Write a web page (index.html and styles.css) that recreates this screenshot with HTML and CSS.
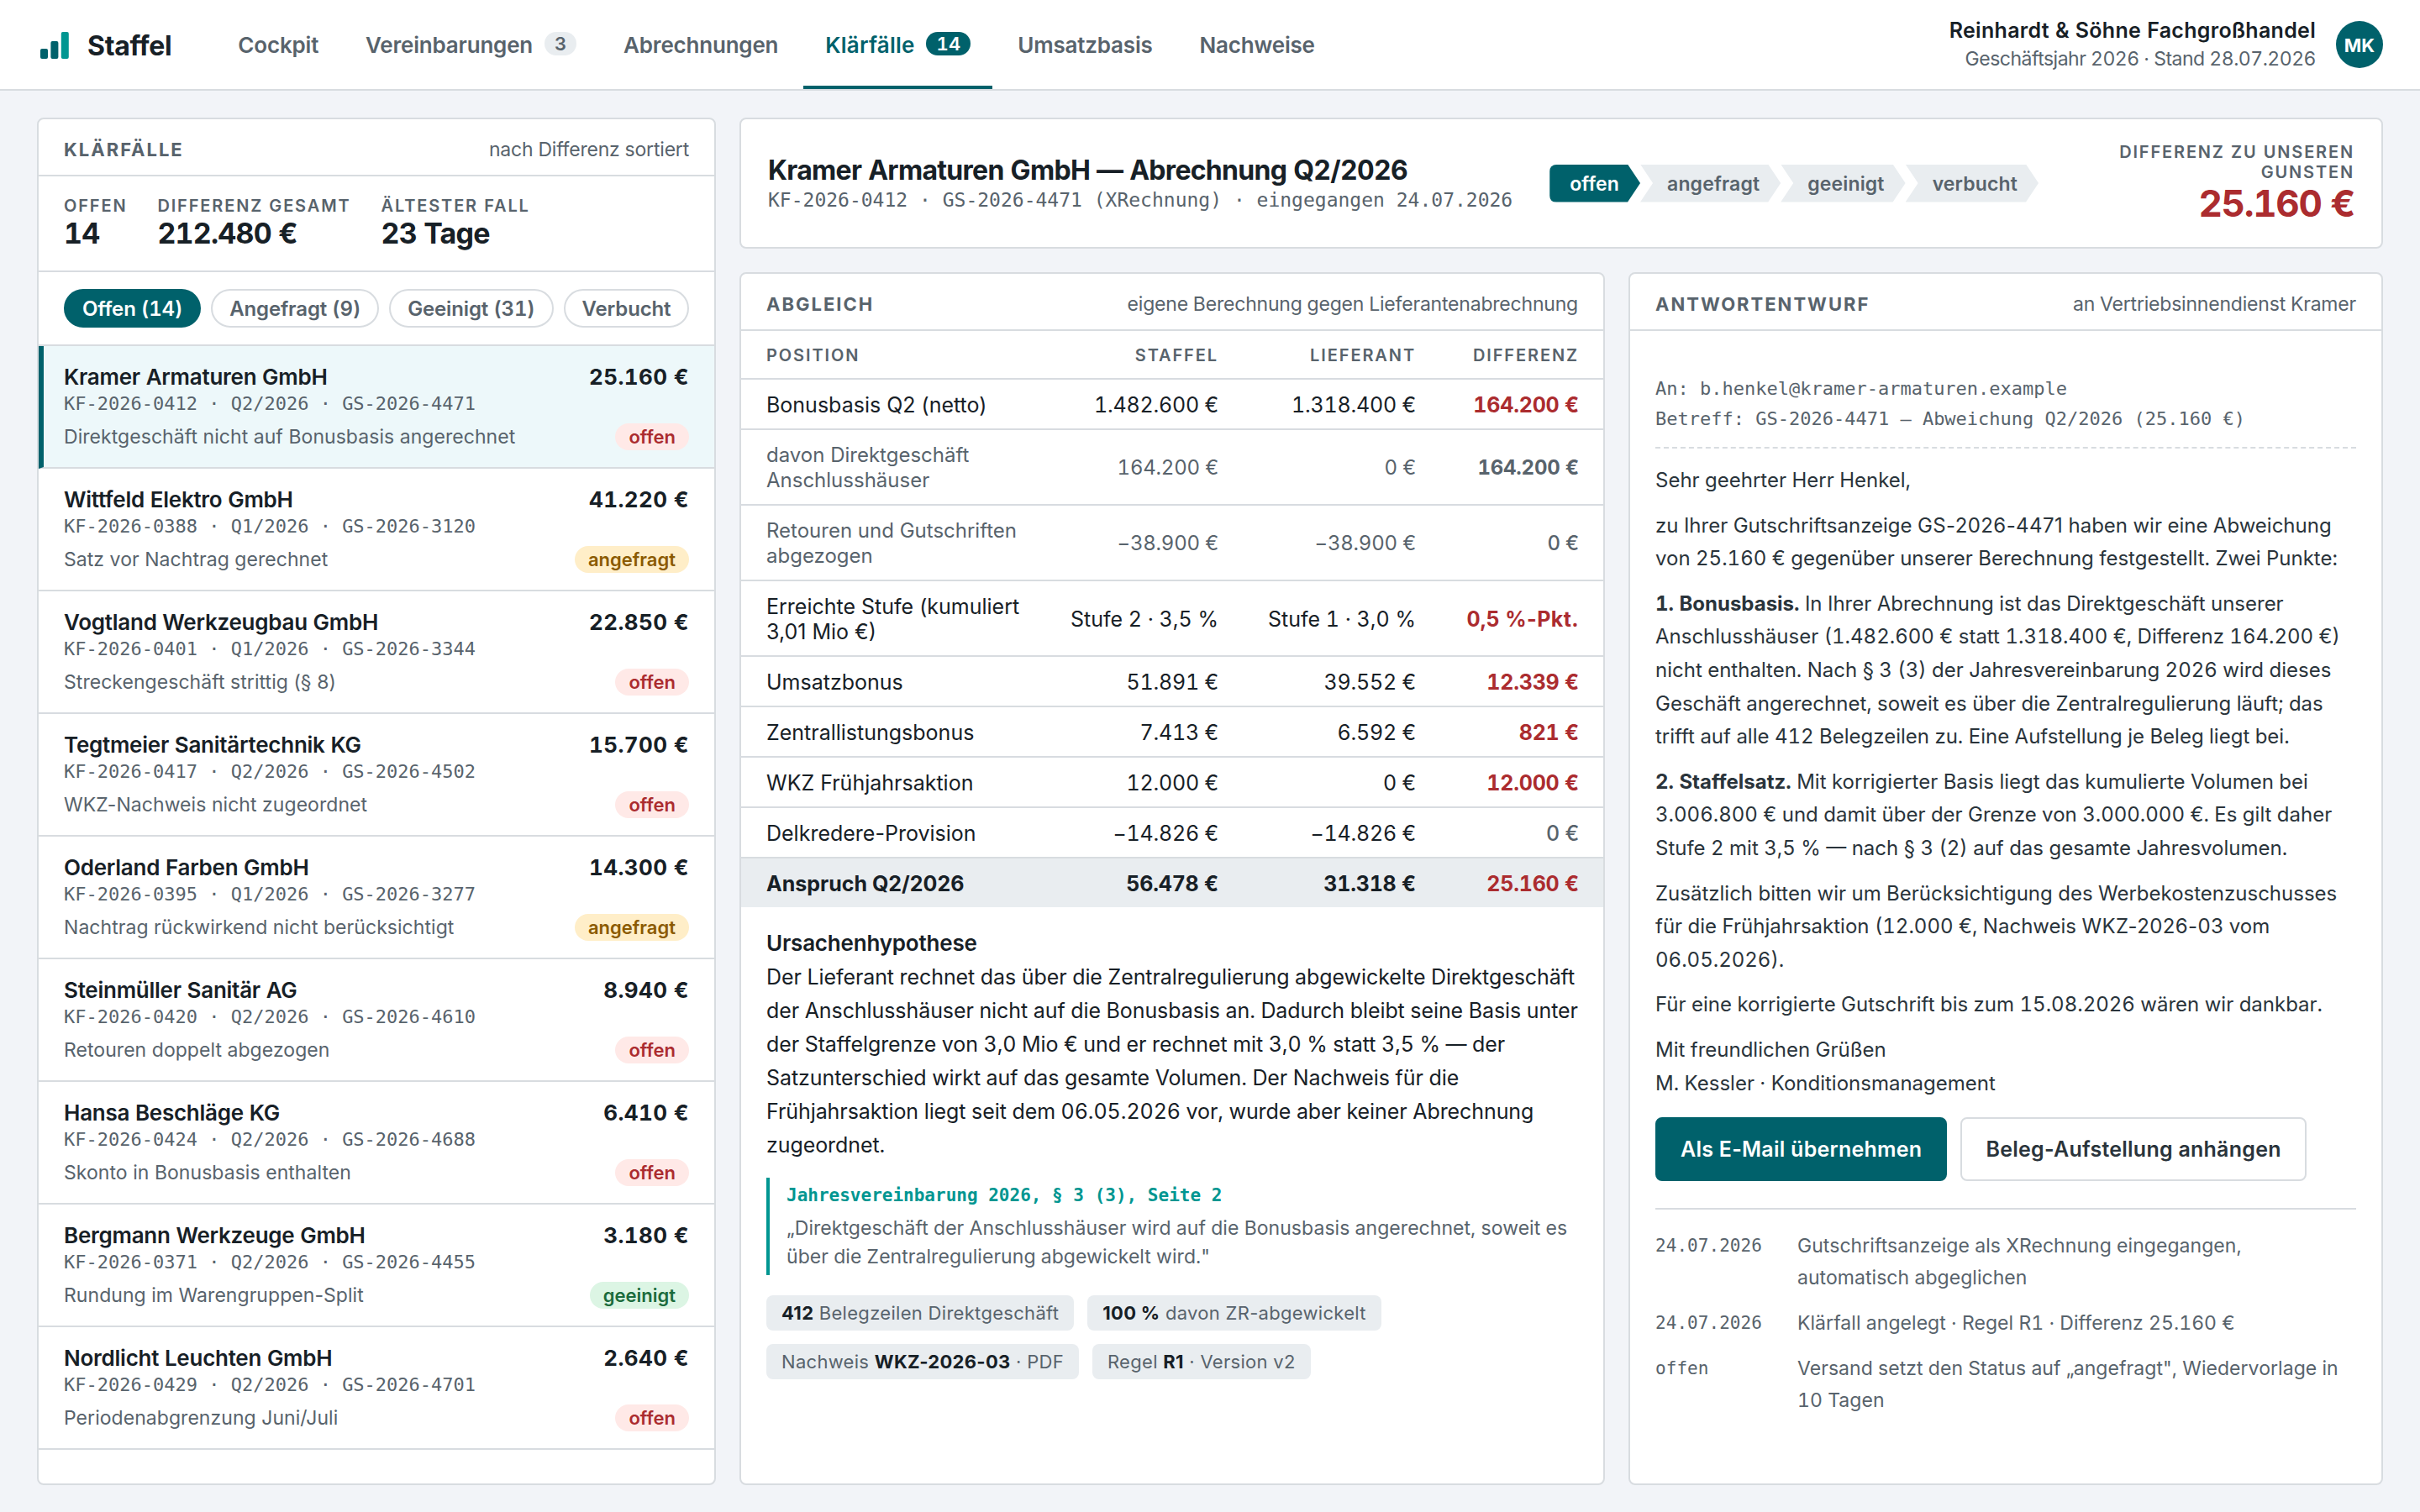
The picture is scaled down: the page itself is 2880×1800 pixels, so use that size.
FILE: index.html
```html
<!DOCTYPE html>
<html lang="de">
<head>
    <meta charset="UTF-8">
    <meta name="viewport" content="width=device-width, initial-scale=1.0">
    <title>Staffel – Klärfälle</title>
    <link rel="stylesheet" href="styles.css">
</head>
<body>
    <header class="topbar">
        <div class="brand">
            <svg class="logo" viewBox="0 0 40 40">
                <rect x="4" y="25" width="9" height="12" rx="2" fill="#00616b"/>
                <rect x="16.4" y="16" width="9" height="21" rx="2" fill="#00616b"/>
                <rect x="28.8" y="5" width="9" height="32" rx="2" fill="#009691"/>
            </svg>
            <span>Staffel</span>
        </div>
        <nav class="nav">
            <a class="nav-item">Cockpit</a>
            <a class="nav-item">Vereinbarungen <span class="count">3</span></a>
            <a class="nav-item">Abrechnungen</a>
            <a class="nav-item active">Klärfälle <span class="count">14</span></a>
            <a class="nav-item">Umsatzbasis</a>
            <a class="nav-item">Nachweise</a>
        </nav>
        <div class="account">
            <div class="account-text">
                <div class="account-name">Reinhardt &amp; Söhne Fachgroßhandel</div>
                <div class="account-meta">Geschäftsjahr 2026 · Stand 28.07.2026</div>
            </div>
            <div class="avatar">MK</div>
        </div>
    </header>

    <main class="layout">
        <section class="panel cases">
            <div class="panel-head">
                <h2>Klärfälle</h2>
                <span>nach Differenz sortiert</span>
            </div>
            <div class="stats">
                <div><div class="label">Offen</div><div class="stat-value">14</div></div>
                <div><div class="label">Differenz gesamt</div><div class="stat-value">212.480 €</div></div>
                <div><div class="label">Ältester Fall</div><div class="stat-value">23 Tage</div></div>
            </div>
            <div class="filters">
                <button class="filter selected">Offen (14)</button>
                <button class="filter">Angefragt (9)</button>
                <button class="filter">Geeinigt (31)</button>
                <button class="filter">Verbucht</button>
            </div>
            <div class="case current">
                <div class="case-row"><span class="case-name">Kramer Armaturen GmbH</span><span class="case-sum">25.160 €</span></div>
                <div class="case-ref">KF-2026-0412 · Q2/2026 · GS-2026-4471</div>
                <div class="case-row case-foot"><span class="case-reason">Direktgeschäft nicht auf Bonusbasis angerechnet</span><span class="tag open">offen</span></div>
            </div>
            <div class="case">
                <div class="case-row"><span class="case-name">Wittfeld Elektro GmbH</span><span class="case-sum">41.220 €</span></div>
                <div class="case-ref">KF-2026-0388 · Q1/2026 · GS-2026-3120</div>
                <div class="case-row case-foot"><span class="case-reason">Satz vor Nachtrag gerechnet</span><span class="tag asked">angefragt</span></div>
            </div>
            <div class="case">
                <div class="case-row"><span class="case-name">Vogtland Werkzeugbau GmbH</span><span class="case-sum">22.850 €</span></div>
                <div class="case-ref">KF-2026-0401 · Q1/2026 · GS-2026-3344</div>
                <div class="case-row case-foot"><span class="case-reason">Streckengeschäft strittig (§ 8)</span><span class="tag open">offen</span></div>
            </div>
            <div class="case">
                <div class="case-row"><span class="case-name">Tegtmeier Sanitärtechnik KG</span><span class="case-sum">15.700 €</span></div>
                <div class="case-ref">KF-2026-0417 · Q2/2026 · GS-2026-4502</div>
                <div class="case-row case-foot"><span class="case-reason">WKZ-Nachweis nicht zugeordnet</span><span class="tag open">offen</span></div>
            </div>
            <div class="case">
                <div class="case-row"><span class="case-name">Oderland Farben GmbH</span><span class="case-sum">14.300 €</span></div>
                <div class="case-ref">KF-2026-0395 · Q1/2026 · GS-2026-3277</div>
                <div class="case-row case-foot"><span class="case-reason">Nachtrag rückwirkend nicht berücksichtigt</span><span class="tag asked">angefragt</span></div>
            </div>
            <div class="case">
                <div class="case-row"><span class="case-name">Steinmüller Sanitär AG</span><span class="case-sum">8.940 €</span></div>
                <div class="case-ref">KF-2026-0420 · Q2/2026 · GS-2026-4610</div>
                <div class="case-row case-foot"><span class="case-reason">Retouren doppelt abgezogen</span><span class="tag open">offen</span></div>
            </div>
            <div class="case">
                <div class="case-row"><span class="case-name">Hansa Beschläge KG</span><span class="case-sum">6.410 €</span></div>
                <div class="case-ref">KF-2026-0424 · Q2/2026 · GS-2026-4688</div>
                <div class="case-row case-foot"><span class="case-reason">Skonto in Bonusbasis enthalten</span><span class="tag open">offen</span></div>
            </div>
            <div class="case">
                <div class="case-row"><span class="case-name">Bergmann Werkzeuge GmbH</span><span class="case-sum">3.180 €</span></div>
                <div class="case-ref">KF-2026-0371 · Q2/2026 · GS-2026-4455</div>
                <div class="case-row case-foot"><span class="case-reason">Rundung im Warengruppen-Split</span><span class="tag agreed">geeinigt</span></div>
            </div>
            <div class="case">
                <div class="case-row"><span class="case-name">Nordlicht Leuchten GmbH</span><span class="case-sum">2.640 €</span></div>
                <div class="case-ref">KF-2026-0429 · Q2/2026 · GS-2026-4701</div>
                <div class="case-row case-foot"><span class="case-reason">Periodenabgrenzung Juni/Juli</span><span class="tag open">offen</span></div>
            </div>
        </section>

        <section class="panel summary">
            <div class="summary-title">
                <h1>Kramer Armaturen GmbH — Abrechnung Q2/2026</h1>
                <div class="summary-ref">KF-2026-0412 · GS-2026-4471 (XRechnung) · eingegangen 24.07.2026</div>
            </div>
            <div class="steps">
                <span class="step done">offen</span>
                <span class="step">angefragt</span>
                <span class="step">geeinigt</span>
                <span class="step">verbucht</span>
            </div>
            <div class="summary-sum">
                <div class="label">Differenz zu unseren Gunsten</div>
                <div class="sum-value">25.160 €</div>
            </div>
        </section>

        <section class="panel compare">
            <div class="panel-head">
                <h2>Abgleich</h2>
                <span>eigene Berechnung gegen Lieferantenabrechnung</span>
            </div>
            <table class="table">
                <thead>
                    <tr><th>Position</th><th>Staffel</th><th>Lieferant</th><th>Differenz</th></tr>
                </thead>
                <tbody>
                    <tr><td>Bonusbasis Q2 (netto)</td><td>1.482.600 €</td><td>1.318.400 €</td><td>164.200 €</td></tr>
                    <tr class="sub"><td>davon Direktgeschäft Anschlusshäuser</td><td>164.200 €</td><td>0 €</td><td>164.200 €</td></tr>
                    <tr class="sub"><td>Retouren und Gutschriften abgezogen</td><td>−38.900 €</td><td>−38.900 €</td><td class="zero">0 €</td></tr>
                    <tr><td>Erreichte Stufe (kumuliert 3,01 Mio €)</td><td class="points">Stufe 2 · 3,5 %</td><td class="points">Stufe 1 · 3,0 %</td><td class="points">0,5 <span class="doc-no">%-Pkt.</span></td></tr>
                    <tr><td>Umsatzbonus</td><td>51.891 €</td><td>39.552 €</td><td>12.339 €</td></tr>
                    <tr><td>Zentrallistungsbonus</td><td>7.413 €</td><td>6.592 €</td><td>821 €</td></tr>
                    <tr><td>WKZ Frühjahrsaktion</td><td>12.000 €</td><td>0 €</td><td>12.000 €</td></tr>
                    <tr><td>Delkredere-Provision</td><td>−14.826 €</td><td>−14.826 €</td><td class="zero">0 €</td></tr>
                    <tr class="total"><td>Anspruch Q2/2026</td><td>56.478 €</td><td>31.318 €</td><td>25.160 €</td></tr>
                </tbody>
            </table>
            <div class="cause">
                <h3>Ursachenhypothese</h3>
                <p>Der Lieferant rechnet das über die Zentralregulierung abgewickelte Direktgeschäft der Anschlusshäuser nicht auf die Bonusbasis an. Dadurch bleibt seine Basis unter der Staffelgrenze von 3,0 Mio € und er rechnet mit 3,0 % statt 3,5 % — der Satzunterschied wirkt auf das gesamte Volumen. Der Nachweis für die Frühjahrsaktion liegt seit dem 06.05.2026 vor, wurde aber keiner Abrechnung zugeordnet.</p>
                <blockquote class="clause">
                    <div class="clause-ref">Jahresvereinbarung 2026, § 3 (3), Seite 2</div>
                    „Direktgeschäft der Anschlusshäuser wird auf die Bonusbasis angerechnet, soweit es über die Zentralregulierung abgewickelt wird."
                </blockquote>
                <div class="facts">
                    <span class="fact"><b>412</b> Belegzeilen Direktgeschäft</span>
                    <span class="fact"><b>100 %</b> davon ZR-abgewickelt</span>
                    <span class="fact">Nachweis <b>WKZ-2026-03</b> · PDF</span>
                    <span class="fact">Regel <b>R1</b> · Version v2</span>
                </div>
            </div>
        </section>

        <section class="panel reply">
            <div class="panel-head">
                <h2>Antwortentwurf</h2>
                <span>an Vertriebsinnendienst Kramer</span>
            </div>
            <div class="reply-body">
                <div class="mail-head">An: b.henkel@kramer-armaturen.example<br>Betreff: GS-2026-4471 — Abweichung Q2/2026 (25.160 €)</div>
                <div class="mail">
                    <p>Sehr geehrter Herr Henkel,</p>
                    <p>zu Ihrer Gutschriftsanzeige <span class="doc-no">GS-2026-4471</span> haben wir eine Abweichung von 25.160 € gegenüber unserer Berechnung festgestellt. Zwei Punkte:</p>
                    <p><b>1. Bonusbasis.</b> In Ihrer Abrechnung ist das Direktgeschäft unserer Anschlusshäuser (1.482.600 € statt 1.318.400 €, Differenz 164.200 €) nicht enthalten. Nach § 3 (3) der Jahresvereinbarung 2026 wird dieses Geschäft angerechnet, soweit es über die Zentralregulierung läuft; das trifft auf alle 412 Belegzeilen zu. Eine Aufstellung je Beleg liegt bei.</p>
                    <p><b>2. Staffelsatz.</b> Mit korrigierter Basis liegt das kumulierte Volumen bei 3.006.800 € und damit über der Grenze von 3.000.000 €. Es gilt daher Stufe 2 mit 3,5 % — nach § 3 (2) auf das gesamte Jahresvolumen.</p>
                    <p>Zusätzlich bitten wir um Berücksichtigung des Werbekostenzuschusses für die Frühjahrsaktion (12.000 €, Nachweis <span class="doc-no">WKZ-2026-03</span> vom 06.05.2026).</p>
                    <p>Für eine korrigierte Gutschrift bis zum 15.08.2026 wären wir dankbar.</p>
                    <p>Mit freundlichen Grüßen<br>M. Kessler · Konditionsmanagement</p>
                </div>
                <div class="actions">
                    <button class="button primary">Als E-Mail übernehmen</button>
                    <button class="button">Beleg-Aufstellung anhängen</button>
                </div>
                <div class="log">
                    <span class="log-date">24.07.2026</span><span>Gutschriftsanzeige als XRechnung eingegangen, automatisch abgeglichen</span>
                    <span class="log-date">24.07.2026</span><span>Klärfall angelegt · Regel R1 · Differenz 25.160 €</span>
                    <span class="log-date">offen</span><span>Versand setzt den Status auf „angefragt", Wiedervorlage in 10 Tagen</span>
                </div>
            </div>
        </section>
    </main>
</body>
</html>
```
FILE: styles.css
```css
* {
    box-sizing: border-box;
}
body {
    display: flex;
    flex-direction: column;
    height: 100vh;
    margin: 0;
    background-color: #f2f4f8;
    color: #172026;
    font-family: Inter, sans-serif;
    font-size: 26px;
    line-height: 1.45;
    font-variant-numeric: tabular-nums;
}
h1, h2, h3, p, blockquote {
    margin: 0;
}
button {
    font-family: inherit;
    cursor: pointer;
}
.topbar {
    display: flex;
    align-items: stretch;
    height: 108px;
    padding: 0 44px;
    background-color: #fff;
    border-bottom: 2px solid #d8dce0;
}
.brand {
    display: flex;
    align-items: center;
    gap: 20px;
    margin-right: 53px;
    font-size: 32px;
    font-weight: 700;
    letter-spacing: -0.32px;
}
.brand span {
    padding-top: 4px;
}
.logo {
    width: 40px;
    height: 40px;
}
.nav {
    display: flex;
    gap: 4px;
}
.nav-item {
    display: flex;
    align-items: center;
    gap: 14px;
    padding: 5px 26px 0;
    color: #58636c;
    font-weight: 600;
    letter-spacing: -0.2px;
    border-bottom: 4px solid transparent;
}
.nav-item.active {
    color: #00616b;
    border-bottom-color: #00616b;
    letter-spacing: 0.2px;
}
.count {
    margin-top: -4px;
    padding: 0 12px;
    border-radius: 14px;
    background-color: #e9edf0;
    font-size: 22px;
    line-height: 28px;
    font-weight: 600;
}
.active .count {
    background-color: #00616b;
    color: #fff;
}
.account {
    display: flex;
    align-items: center;
    gap: 24px;
    margin-left: auto;
    text-align: right;
}
.account-name {
    font-size: 25px;
    font-weight: 600;
    letter-spacing: 0.3px;
}
.account-meta {
    color: #58636c;
    font-size: 23px;
    letter-spacing: -0.5px;
}
.avatar {
    width: 56px;
    height: 56px;
    border-radius: 50%;
    background-color: #00616b;
    color: #fff;
    font-size: 22px;
    font-weight: 700;
    line-height: 58px;
    text-align: center;
}
.layout {
    flex: 1;
    min-height: 0;
    display: grid;
    grid-template-columns: 808px 1030px 898px;
    grid-template-rows: 156px 1fr;
    gap: 28px;
    padding: 32px 44px;
}
.panel {
    background-color: #fff;
    border: 2px solid #d8dce0;
    border-radius: 8px;
    overflow: hidden;
}
.panel-head {
    display: flex;
    align-items: center;
    justify-content: space-between;
    height: 68px;
    padding: 8px 30px 0;
    border-bottom: 2px solid #d8dce0;
    color: #58636c;
    font-size: 23px;
    letter-spacing: -0.2px;
}
.panel-head h2 {
    font-size: 22px;
    font-weight: 700;
    letter-spacing: 2px;
    text-transform: uppercase;
}
.label {
    color: #58636c;
    font-size: 20px;
    font-weight: 600;
    letter-spacing: 1.85px;
    text-transform: uppercase;
}

/* case list */
.cases {
    grid-row: span 2;
}
.stats {
    display: flex;
    gap: 36px;
    height: 114px;
    padding: 21px 30px;
    border-bottom: 2px solid #d8dce0;
}
.stat-value {
    font-size: 34px;
    font-weight: 700;
    line-height: 36px;
    letter-spacing: -0.8px;
}
.filters {
    display: flex;
    align-items: center;
    gap: 12px;
    height: 88px;
    padding: 0 30px;
    border-bottom: 2px solid #d8dce0;
}
.filter {
    height: 46px;
    padding: 1px 20px 0;
    border: 2px solid #d8dce0;
    border-radius: 23px;
    background-color: #fff;
    color: #58636c;
    font-size: 24px;
    font-weight: 600;
    font-variant-numeric: tabular-nums;
    letter-spacing: -0.15px;
    white-space: nowrap;
}
.filter.selected {
    border-color: #00616b;
    background-color: #00616b;
    color: #fff;
}
.case {
    height: 146px;
    padding: 19px 30px 0;
    border-bottom: 2px solid #d8dce0;
}
.case.current {
    padding-left: 24px;
    border-left: 6px solid #00616b;
    background-color: #edf8fa;
}
.case-row {
    display: flex;
    justify-content: space-between;
    align-items: center;
}
.case-name {
    font-weight: 600;
    line-height: 36px;
    letter-spacing: -0.25px;
}
.case-sum {
    font-weight: 700;
    line-height: 36px;
    letter-spacing: 0.4px;
}
.case-ref {
    margin-top: 1px;
    color: #58636c;
    font-family: "DejaVu Sans Mono", monospace;
    font-size: 22px;
    line-height: 26px;
}
.case-foot {
    margin-top: 10px;
    line-height: 32px;
}
.case-reason {
    color: #58636c;
    font-size: 23px;
    font-variant-numeric: normal;
    letter-spacing: 0.05px;
}
.tag {
    padding: 0 16px;
    border-radius: 16px;
    font-size: 22px;
    font-weight: 600;
}
.tag.open {
    background-color: #ffe9e7;
    color: #ab2c2f;
}
.tag.asked {
    background-color: #ffeec8;
    color: #8b5a00;
}
.tag.agreed {
    background-color: #dcf5e4;
    color: #1b6b3c;
}

/* header of the open case */
.summary {
    grid-column: span 2;
    display: flex;
    align-items: center;
    gap: 44px;
    padding: 0 32px;
}
.summary-title {
    white-space: nowrap;
}
.summary h1 {
    font-size: 32px;
    font-weight: 700;
    line-height: 40px;
    letter-spacing: -0.7px;
}
.summary-ref {
    color: #58636c;
    font-family: "DejaVu Sans Mono", monospace;
    font-size: 23px;
    line-height: 30px;
}
.steps {
    display: flex;
}
.step {
    padding: 2px 25px 0 32px;
    background-color: #e9edf0;
    color: #58636c;
    font-size: 23px;
    font-weight: 600;
    line-height: 43px;
    letter-spacing: 0.15px;
    clip-path: polygon(0 0, calc(100% - 15px) 0, 100% 50%, calc(100% - 15px) 100%, 0 100%, 15px 50%);
}
.step.done {
    padding-left: 24px;
    border-radius: 8px 0 0 8px;
    background-color: #00616b;
    color: #fff;
    clip-path: polygon(0 0, calc(100% - 15px) 0, 100% 50%, calc(100% - 15px) 100%, 0 100%);
}
.summary-sum {
    width: 300px;
    margin-left: auto;
    text-align: right;
}
.summary-sum .label {
    line-height: 24px;
}
.sum-value {
    color: #ab2c2f;
    font-size: 44px;
    font-weight: 700;
    line-height: 50px;
    letter-spacing: -1.3px;
}

/* comparison */
.table {
    width: 100%;
    table-layout: fixed;
    border-collapse: collapse;
    font-size: 25px;
    line-height: 30px;
}
.table th, .table td {
    padding: 15px 29px 13px 0;
    border-bottom: 2px solid #d8dce0;
    text-align: right;
    white-space: nowrap;
}
.table td {
    letter-spacing: -0.2px;
}
.table th:first-child, .table td:first-child {
    padding-left: 30px;
    padding-right: 0;
    text-align: left;
    white-space: normal;
    font-variant-numeric: normal;
}
.table td:first-child {
    letter-spacing: 0;
}
.table th {
    width: 235px;
    color: #58636c;
    font-size: 20px;
    font-weight: 600;
    line-height: 28px;
    letter-spacing: 1.9px;
    text-transform: uppercase;
}
.table th:first-child {
    width: 350px;
}
.table th:nth-child(2) {
    width: 247px;
}
.table th:last-child {
    width: 194px;
}
.table td:last-child {
    color: #ab2c2f;
    font-weight: 700;
}
.table .sub td {
    color: #58636c;
    font-size: 24px;
}
.table td.zero:last-child {
    color: #58636c;
    font-weight: 500;
}
.table td.points {
    letter-spacing: 0;
}
.table .total td {
    background-color: #e9edf0;
    border-bottom: none;
    font-weight: 700;
}
.cause {
    padding: 23px 30px;
    font-size: 25px;
    line-height: 40px;
    letter-spacing: -0.08px;
}
.cause h3 {
    font-size: 26px;
    font-weight: 600;
    letter-spacing: -0.2px;
}
.clause {
    margin-top: 19px;
    padding: 4px 0 4px 20px;
    border-left: 4px solid #009691;
    color: #58636c;
    font-size: 23px;
    line-height: 34.5px;
    letter-spacing: 0.05px;
}
.clause-ref {
    margin-bottom: 4px;
    color: #009691;
    font-family: "DejaVu Sans Mono", monospace;
    font-size: 21px;
    font-weight: 700;
    letter-spacing: 0;
}
.facts {
    display: flex;
    flex-wrap: wrap;
    gap: 16px;
    margin-top: 24px;
}
.fact {
    padding: 1px 18px 0;
    border-radius: 8px;
    background-color: #e9edf0;
    color: #58636c;
    font-size: 22px;
    font-variant-numeric: normal;
    line-height: 41px;
    letter-spacing: 0.3px;
}
.fact b {
    color: #172026;
}

/* reply draft */
.reply-body {
    padding: 51px 30px;
}
.mail-head {
    padding-bottom: 15px;
    border-bottom: 2px dashed #d8dce0;
    color: #58636c;
    font-family: "DejaVu Sans Mono", monospace;
    font-size: 22px;
    line-height: 36px;
}
.mail {
    margin-top: 18px;
    color: #2a343b;
    font-size: 24px;
    line-height: 39.6px;
}
.mail p {
    margin-bottom: 14px;
}
.doc-no {
    font-variant-numeric: normal;
    letter-spacing: 0.4px;
}
.actions {
    display: flex;
    gap: 16px;
    margin-top: 21px;
    padding-bottom: 32px;
    border-bottom: 2px solid #d8dce0;
}
.button {
    height: 76px;
    padding: 0 28px;
    border: 2px solid #d8dce0;
    border-radius: 8px;
    background-color: #fff;
    color: #2a343b;
    font-size: 25px;
    font-weight: 600;
    letter-spacing: 0.25px;
}
.button.primary {
    border-color: #00616b;
    background-color: #00616b;
    color: #fff;
}
.log {
    display: grid;
    grid-template-columns: 141px 1fr;
    gap: 16px 28px;
    margin-top: 24px;
    color: #58636c;
    font-size: 23px;
    line-height: 38px;
    letter-spacing: 0.05px;
}
.log-date {
    font-family: "DejaVu Sans Mono", monospace;
    font-size: 21px;
}
```
